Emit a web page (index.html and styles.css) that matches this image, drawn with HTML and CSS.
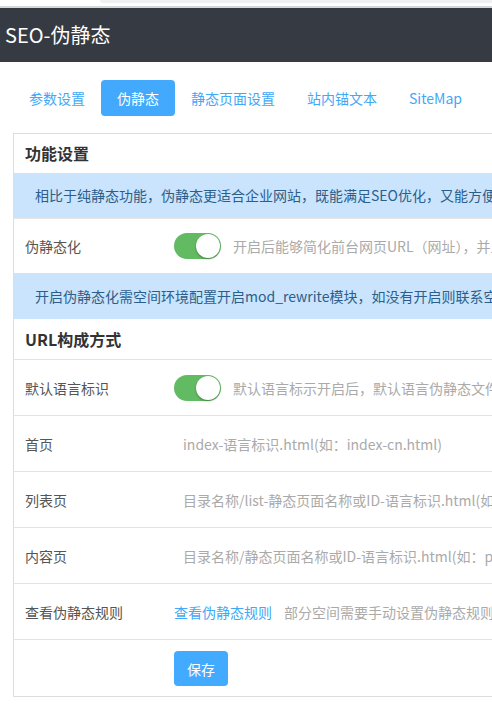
FILE: index.html
```html
<!DOCTYPE html>
<html lang="zh-CN">
<head>
<meta charset="utf-8">
<title>SEO-伪静态</title>
<link rel="stylesheet" href="styles.css">
</head>
<body>
<div class="topstrip"><div class="topstrip-tab"></div></div>
<header class="page-header"><h1 class="page-title">SEO-伪静态</h1></header>
<nav class="tabs">
  <a class="tab">参数设置</a>
  <a class="tab active">伪静态</a>
  <a class="tab">静态页面设置</a>
  <a class="tab">站内锚文本</a>
  <a class="tab">SiteMap</a>
</nav>
<section class="panel">
  <div class="section-title">功能设置</div>
  <div class="alert">相比于纯静态功能，伪静态更适合企业网站，既能满足SEO优化，又能方便网站的管理和维护。</div>
  <div class="row row-first">
    <div class="label">伪静态化</div>
    <div class="value"><span class="switch"><span class="knob"></span></span><span class="desc">开启后能够简化前台网页URL（网址），并且有利于搜索引擎收录。</span></div>
  </div>
  <div class="alert alert-2">开启伪静态化需空间环境配置开启mod_rewrite模块，如没有开启则联系空间商开启。</div>
  <div class="section-title section-title-2">URL构成方式</div>
  <div class="row">
    <div class="label">默认语言标识</div>
    <div class="value"><span class="switch"><span class="knob"></span></span><span class="desc">默认语言标示开启后，默认语言伪静态文件名中会带上语言标识。</span></div>
  </div>
  <div class="row">
    <div class="label">首页</div>
    <div class="value"><span class="plain">index-语言标识.html(如：index-cn.html)</span></div>
  </div>
  <div class="row">
    <div class="label">列表页</div>
    <div class="value"><span class="plain">目录名称/list-静态页面名称或ID-语言标识.html(如：news/list-news-cn.html)</span></div>
  </div>
  <div class="row">
    <div class="label">内容页</div>
    <div class="value"><span class="plain">目录名称/静态页面名称或ID-语言标识.html(如：page/page-1-cn.html)</span></div>
  </div>
  <div class="row">
    <div class="label">查看伪静态规则</div>
    <div class="value"><a class="link">查看伪静态规则</a><span class="desc desc-link">部分空间需要手动设置伪静态规则才能生效。</span></div>
  </div>
  <div class="row row-last">
    <div class="label"></div>
    <div class="value"><button class="btn">保存</button></div>
  </div>
</section>
</body>
</html>
```

FILE: styles.css
```css
html, body {
  margin: 0;
  padding: 0;
  background: #fff;
}
body {
  width: 492px;
  height: 706px;
  overflow: hidden;
  font-family: "Noto Sans CJK SC", "Open Sans", sans-serif;
  font-size: 14px;
  color: #555;
}
.topstrip {
  height: 6px;
  padding-left: 100px;
  border-bottom: 2px solid #d6d7d9;
  background: #fff;
}
.topstrip-tab {
  height: 3px;
  background: #eff0f2;
  border-bottom-left-radius: 10px;
}
.page-header {
  height: 54px;
  background: #363a42;
  display: flex;
  align-items: center;
  padding-left: 5px;
}
.page-title {
  margin: 0;
  font-size: 20px;
  font-weight: normal;
  color: #fff;
  line-height: 1;
}
.tabs {
  display: flex;
  padding: 18px 0 0 13px;
  height: 36px;
  margin-bottom: 17px;
}
.tab {
  display: flex;
  align-items: center;
  padding: 0 16px;
  height: 36px;
  color: #3fa8f7;
  font-size: 14px;
  border-radius: 4px;
  white-space: nowrap;
}
.tab.active {
  background: #42a9fc;
  color: #fff;
}
.panel {
  margin-left: 13px;
  width: 800px;
  border: 1px solid #dddddd;
}
.section-title {
  height: 39px;
  line-height: 39px;
  padding-left: 11px;
  font-size: 16px;
  font-weight: bold;
  color: #333;
  white-space: nowrap;
}
.section-title-2 {
  height: 39px;
  border-top: 1px solid #fff;
  border-bottom: 1px solid #e3e3e3;
}
.alert {
  height: 45px;
  line-height: 45px;
  padding-left: 21px;
  background: #c9e4fc;
  color: #2c5e8c;
  white-space: nowrap;
}
.alert-2 {
  height: 46px;
  line-height: 46px;
}
.row {
  display: flex;
  align-items: center;
  height: 55px;
  border-bottom: 1px solid #e3e3e3;
  white-space: nowrap;
}
.row-first {
  border-top: 1px solid #e6e6e6;
  height: 54px;
  border-bottom: none;
}
.row-last {
  border-bottom: none;
  height: 56px;
  align-items: flex-start;
}
.label {
  width: 149px;
  padding-left: 11px;
  flex: none;
  color: #555;
}
.value {
  display: flex;
  align-items: center;
}
.switch {
  position: relative;
  width: 47px;
  height: 26px;
  border-radius: 13px;
  background: #62bb62;
  flex: none;
}
.knob {
  position: absolute;
  right: 1px;
  top: 1px;
  width: 24px;
  height: 24px;
  border-radius: 50%;
  background: #fff;
  box-shadow: 0 1px 2px rgba(0,0,0,0.35);
}
.desc {
  margin-left: 12px;
  color: #aaa;
}
.desc-link {
  margin-left: 12px;
}
.plain {
  padding-left: 9px;
  color: #aaa;
}
.link {
  color: #3fa8f7;
}
.btn {
  margin-top: 11px;
  width: 54px;
  height: 35px;
  border: none;
  border-radius: 4px;
  background: #42aaff;
  color: #fff;
  font-family: "Noto Sans CJK SC", sans-serif;
  font-size: 14px;
  padding: 0;
}
```
